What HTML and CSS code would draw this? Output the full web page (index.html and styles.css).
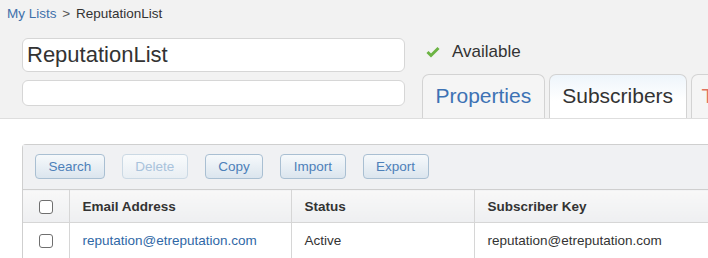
FILE: index.html
```html
<!DOCTYPE html>
<html lang="en">

<head>
    <meta charset="UTF-8">
    <meta name="viewport" content="width=device-width, initial-scale=1.0">
    <title>ReputationList</title>
    <link rel="stylesheet" href="styles.css">
</head>

<body>
    <div class="header">
        <div class="breadcrumb">
            <a href="#" class="crumb-link">My Lists</a>
            <span class="crumb-sep">&gt;</span>
            <span class="crumb-current">ReputationList</span>
        </div>

        <div class="title-row">
            <!-- Name and description -->
            <div class="title-fields">
                <input type="text" class="name-input" value="ReputationList">
                <input type="text" class="desc-input" value="">
            </div>

            <div class="title-side">
                <div class="status">
                    <svg class="status-icon" width="14" height="12" viewBox="0 0 14 12">
                        <path d="M1.5 6 L5 9.5 L12.5 2" stroke="#6cb444" stroke-width="3" fill="none" />
                    </svg>
                    <span>Available</span>
                </div>
                <div class="tabs">
                    <div class="tab">Properties</div>
                    <div class="tab tab-active">Subscribers</div>
                    <div class="tab tab-red">Tracking</div>
                </div>
            </div>
        </div>
    </div>

    <div class="content">
        <div class="panel">
            <div class="toolbar">
                <button class="btn">Search</button>
                <button class="btn" disabled>Delete</button>
                <button class="btn">Copy</button>
                <button class="btn">Import</button>
                <button class="btn">Export</button>
            </div>

            <table class="grid">
                <thead>
                    <tr>
                        <th class="col-check"><span class="checkbox"></span></th>
                        <th class="col-email">Email Address</th>
                        <th class="col-status">Status</th>
                        <th>Subscriber Key</th>
                    </tr>
                </thead>
                <tbody>
                    <tr>
                        <td class="col-check"><span class="checkbox"></span></td>
                        <td><a href="#" class="email-link">reputation@etreputation.com</a></td>
                        <td>Active</td>
                        <td>reputation@etreputation.com</td>
                    </tr>
                </tbody>
            </table>
        </div>
    </div>
</body>

</html>
```

FILE: styles.css
```css
body {
    font-family: "Liberation Sans", Arial, sans-serif;
    background-color: #ffffff;
    margin: 0;
    padding: 0;
    overflow: hidden;
}

.header {
    background-color: #f2f2f2;
    border-bottom: 1px solid #dedede;
}

.breadcrumb {
    height: 27px;
    line-height: 27px;
    padding-left: 7px;
    font-size: 13.5px;
    white-space: nowrap;
}

.crumb-link {
    color: #3f70aa;
    text-decoration: none;
}

.crumb-sep {
    color: #555555;
    margin: 0 2px;
}

.crumb-current {
    color: #333333;
}

.title-row {
    display: flex;
    margin-top: 11px;
    padding-left: 22px;
    white-space: nowrap;
}

.title-fields {
    display: flex;
    flex-direction: column;
    flex-shrink: 0;
    width: 383px;
}

.name-input,
.desc-input {
    box-sizing: border-box;
    width: 100%;
    border: 1px solid #d6d6d6;
    border-radius: 6px;
    background-color: #ffffff;
    font-family: "Liberation Sans", Arial, sans-serif;
    color: #333333;
    outline: none;
    margin: 0;
}

.name-input {
    height: 34px;
    padding: 0 4px;
    font-size: 22px;
    margin-bottom: 8px;
}

.desc-input {
    height: 26px;
}

.title-side {
    flex: 1;
    min-width: 0;
    overflow: hidden;
    margin-left: 17px;
    display: flex;
    flex-direction: column;
}

.status {
    display: flex;
    align-items: center;
    height: 24px;
    padding: 2px 0 0 4px;
    font-size: 17px;
    color: #333333;
}

.status-icon {
    margin-right: 12px;
}

.tabs {
    display: flex;
    margin-top: 10px;
}

.tab {
    box-sizing: border-box;
    flex-shrink: 0;
    height: 44px;
    line-height: 42px;
    padding: 0 12.5px;
    margin-right: 4px;
    font-size: 21px;
    color: #3d72b4;
    background-color: #f5f5f5;
    border: 1px solid #d3d3d3;
    border-bottom: none;
    border-radius: 7px 7px 0 0;
}

.tab-active {
    color: #333333;
    background: linear-gradient(#eef5fb, #ffffff 60%);
}

.tab-red {
    color: #e0735f;
    padding-left: 10px;
}

.content {
    padding: 25px 0 0 22px;
}

.panel {
    border: 1px solid #cfcfcf;
    border-right: none;
    border-radius: 4px 0 0 0;
}

.toolbar {
    display: flex;
    gap: 17px;
    height: 44px;
    padding: 9px 0 0 12px;
    box-sizing: border-box;
    background-color: #f0f1f3;
}

.btn {
    height: 25px;
    padding: 0 12.5px;
    font-family: "Liberation Sans", Arial, sans-serif;
    font-size: 13.5px;
    color: #4d80b9;
    background: linear-gradient(#f6f9fb, #dbe5ee);
    border: 1px solid #a9bfd2;
    border-radius: 4px;
}

.btn:disabled {
    color: #a9c3dc;
    background: linear-gradient(#f9fbfc, #e8eef3);
    border-color: #cbd9e4;
}

.grid {
    width: 100%;
    border-collapse: collapse;
    font-size: 13.5px;
    color: #333333;
}

.grid th {
    height: 32px;
    text-align: left;
    font-weight: bold;
    padding: 0 13px;
    background: linear-gradient(#f8f8f8, #eeeff1);
    border-top: 1px solid #cfcfcf;
    border-bottom: 1px solid #d6d6d6;
    border-left: 1px solid #d6d6d6;
}

.grid td {
    height: 35px;
    padding: 0 13px;
    border-left: 1px solid #d6d6d6;
    white-space: nowrap;
}

.grid th:first-child,
.grid td:first-child {
    border-left: none;
}

.grid .col-check {
    width: 46px;
    box-sizing: border-box;
    text-align: center;
    padding: 0;
}

.col-email {
    width: 195px;
}

.col-status {
    width: 156px;
}

.checkbox {
    display: inline-block;
    box-sizing: border-box;
    width: 14px;
    height: 14px;
    border: 1px solid #6f6f6f;
    border-radius: 3px;
    background-color: #ffffff;
    vertical-align: middle;
}

.email-link {
    color: #2f68a6;
    text-decoration: none;
}
```
